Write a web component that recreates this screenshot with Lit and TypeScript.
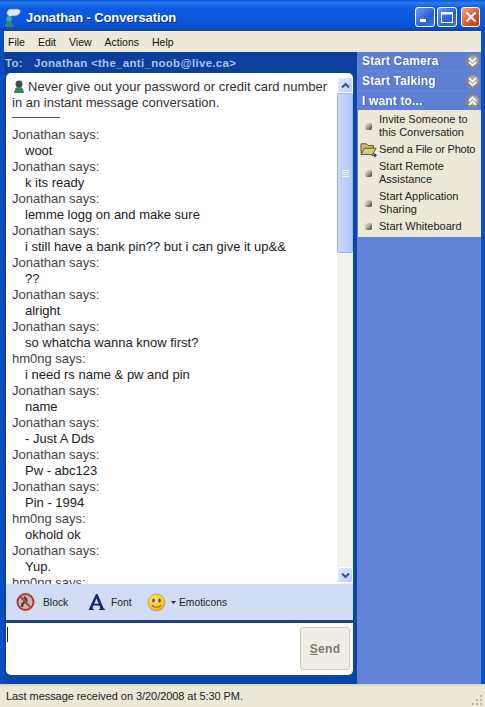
import { LitElement, html, css, svg } from "lit";
import { customElement } from "lit/decorators.js";

const chat: [string, string][] = [
  ["Jonathan says:", "woot"],
  ["Jonathan says:", "k its ready"],
  ["Jonathan says:", "lemme logg on and make sure"],
  ["Jonathan says:", "i still have a bank pin?? but i can give it up&&"],
  ["Jonathan says:", "??"],
  ["Jonathan says:", "alright"],
  ["Jonathan says:", "so whatcha wanna know first?"],
  ["hm0ng says:", "i need rs name & pw and pin"],
  ["Jonathan says:", "name"],
  ["Jonathan says:", "- Just A Dds"],
  ["Jonathan says:", "Pw - abc123"],
  ["Jonathan says:", "Pin - 1994"],
  ["hm0ng says:", "okhold ok"],
  ["Jonathan says:", "Yup."],
];

const chevrons = (up: boolean) => svg`<svg class="chev" width="17" height="17" viewBox="0 0 17 17">
  <circle cx="8.5" cy="8.5" r="7.5" fill="#84868f"/>
  <circle cx="9.500" cy="7.500" r="5" fill="#a8a9ad"/>
  <path d="${up ? "M5 8l3.5-3.5L12 8M5 12l3.5-3.5L12 12" : "M5 5l3.5 3.5L12 5M5 9l3.5 3.5L12 9"}" fill="none" stroke="#fff" stroke-width="1.7"/>
</svg>`;

const bullet = svg`<svg width="9" height="9" viewBox="0 0 9 9"><defs><linearGradient id="b" x1="0" y1="0" x2="1" y2="1"><stop offset="0" stop-color="#f4f2ea"/><stop offset=".5" stop-color="#a9a79b"/><stop offset="1" stop-color="#2c2c2c"/></linearGradient></defs><rect x="1" y="1" width="7" height="7" rx="2" fill="url(#b)"/></svg>`;

const folder = svg`<svg class="folder" width="18" height="16" viewBox="0 0 20 18">
  <path d="M1 2h6l2 2h6v9H1z" fill="#c9bd74" stroke="#4d4a2c"/>
  <path d="M1 14l4-7h13l-4 7z" fill="#d8cc80" stroke="#4d4a2c"/>
  <path d="M13 15h4M16 13l2 2-2 2" fill="none" stroke="#1c2c4c" stroke-width="1.200"/>
</svg>`;

@customElement("app-root")
export class AppRoot extends LitElement {
  static styles = css`
    :host { display: block; width: 485px; height: 707px; overflow: hidden; }
    * { box-sizing: border-box; }
    .win { width: 485px; height: 707px; display: flex; flex-direction: column; background: #0a4ec0;
      font-family: "Liberation Sans", Arial, sans-serif; font-size: 13px; color: #222; }
    .title { height: 31px; flex: none; display: flex; align-items: center; padding: 4px 5px 0 4px; gap: 4px;
      background: linear-gradient(#0a56d6 0, #2a7cf2 3px, #0b5be0 8px, #0a55dc 22px, #0a4ec8 28px, #0a40a8 31px);
      color: #fff; font-weight: bold; font-size: 13px; text-shadow: 1px 1px 0 #0a2f80; letter-spacing: -.1px; }
    .title .name { flex: 1; }
    .btns { display: flex; gap: 2px; margin-top: -2px; }
    .wbtn { width: 20px; height: 20px; border: 1px solid #fff; border-radius: 3px; display: flex; align-items: center; justify-content: center;
      background: linear-gradient(135deg, #6f9cf0, #2a5fd8 60%, #3c78e8); }
    .wbtn.close { width: 19px; margin-left: 2px; background: linear-gradient(135deg, #eda58e, #d8552e 60%, #c03a18); }
    .menu { height: 21px; flex: none; margin: 0 4px; background: #ece9d8; display: flex; align-items: center; padding-left: 4px; gap: 13px; color: #111; font-size: 10.5px; border-top: 1px solid #f6f4ea; }
    .main { flex: 1; min-height: 0; display: flex; margin: 0 4px; background: #6383d8; }
    .left { width: 353px; flex: none; display: flex; flex-direction: column; background: #0c45a8; padding: 0 4px 9px 2px; }
    .to { height: 21px; flex: none; display: flex; align-items: center; color: #a9c4f0; font-weight: bold; font-size: 11.5px; gap: 11px; letter-spacing: .3px; margin-left: -1px; background: #0a3f9e; margin-right: -4px; }
    .chatbox { flex: none; height: 511px; background: #fff; border-radius: 5px 5px 0 0; display: flex; overflow: hidden; }
    .log { flex: 1; min-width: 0; overflow: hidden; padding: 6px 0 0 6px; line-height: 16px; color: #333; }
    .warn-ic { display: inline-block; vertical-align: -2px; margin: 0 3px 0 1px; }
    .warn { height: 32px; }
    .rule { width: 48px; height: 1px; background: #555; margin: 6px 0 0 0; }
    .msgs { margin-top: 9px; }
    .say { color: #444; }
    .txt { padding-left: 13px; color: #222; }
    .sb { width: 16px; flex: none; margin-top: 4px; background: #f3f1ec; display: flex; flex-direction: column; padding-bottom: 1px; }
    .sbb { height: 16px; flex: none; background: linear-gradient(135deg, #e3ebfc, #bccdf5); border: 1px solid #fff; border-radius: 2px; display: flex; align-items: center; justify-content: center; }
    .thumb { height: 160px; flex: none; background: linear-gradient(90deg, #cad9fa, #b4c8f5); border: 1px solid #9db6ee; border-radius: 2px; display: flex; flex-direction: column; align-items: center; justify-content: center; gap: 1px; }
    .thumb i { display: block; width: 7px; height: 1px; background: #eef3fe; }
    .sb .grow { flex: 1; }
    .tools { height: 36px; flex: none; background: #d3dcf5; display: flex; align-items: center; font-size: 10.3px; color: #222; padding-left: 10px; }
    .tool { display: flex; align-items: center; }
    .tool.block { gap: 8px; width: 72px; }
    .tool.font { gap: 5px; width: 59px; }
    .arrow { margin: 0 3px 0 5px; }
    .sep { height: 3px; flex: none; background: #1c4290; }
    .input { height: 52px; flex: none; background: #fff; border-radius: 0 0 5px 5px; display: flex; justify-content: space-between; padding: 4px 3px 5px 1px; }
    .caret { width: 1px; height: 15px; background: #222; }
    .send { width: 50px; height: 43px; background: #f0eee4; border: 1px solid #cdcab8; border-radius: 3px; color: #7a7a72; font-weight: bold; font-size: 12px; display: flex; align-items: center; justify-content: center; letter-spacing: .3px; }
    .side { flex: 1; padding-left: 1px; display: flex; flex-direction: column; background: #6383d8; }
    .sh { height: 18px; flex: none; margin-top: 2px; background: #5f7fd2; color: #fff; font-weight: bold; font-size: 12px; display: flex; align-items: center; justify-content: space-between; padding: 0 0 0 4px; letter-spacing: .15px; text-shadow: 1px 0 0 #3c5cb0; }
    .sh:first-child { margin-top: 0; }
    .tasks { background: #ece9d8; height: 127px; padding-top: 1px; display: flex; flex-direction: column; font-size: 11px; color: #222; line-height: 13px; }
    .task { display: flex; flex: none; align-items: center; padding: 2px 0; white-space: nowrap; }
    .ic { width: 21px; height: 13px; flex: none; display: flex; align-items: center; justify-content: center; }
    .send-file { letter-spacing: -.2px; }
    .status { height: 23px; flex: none; background: linear-gradient(#d8d4c2, #ece9d8 4px); display: flex; align-items: center; padding-left: 6px; font-size: 11px; letter-spacing: -.06px; color: #222; position: relative; }
    .grip { position: absolute; right: 2px; bottom: 1px; }
  `;

  render() {
    return html`<div class="win">
      <div class="title">
        <svg width="18" height="20" viewBox="0 0 18 20">
          <path d="M6 1h7c3 0 4 2 3 4s-3 3-6 3H7l-2 2V8C2 7 2 2 6 1z" fill="#dfe9f5" stroke="#5b7ca8" stroke-width=".6"/>
          <circle cx="5" cy="11" r="3" fill="#3aa0b8"/>
          <path d="M1 19c0-4 2-6 4-6s4 2 5 6z" fill="#2b8a60"/>
        </svg>
        <span class="name">Jonathan - Conversation</span>
        <div class="btns">
          <div class="wbtn"><svg width="12" height="12" viewBox="0 0 12 12"><rect x="1" y="8" width="6" height="3" fill="#fff"/></svg></div>
          <div class="wbtn"><svg width="14" height="14" viewBox="0 0 14 14"><rect x="1.500" y="2.500" width="11" height="10" fill="none" stroke="#fff"/><rect x="1" y="2" width="12" height="2.500" fill="#fff"/></svg></div>
          <div class="wbtn close"><svg width="14" height="14" viewBox="0 0 14 14"><path d="M2.500 2.500l9 9M11.500 2.500l-9 9" stroke="#fff" stroke-width="2.200"/></svg></div>
        </div>
      </div>
      <div class="menu"><span>File</span><span>Edit</span><span>View</span><span>Actions</span><span>Help</span></div>
      <div class="main">
        <div class="left">
          <div class="to"><span>To:</span><span>Jonathan &lt;the_anti_noob@live.ca&gt;</span></div>
          <div class="chatbox">
            <div class="log">
              <div class="warn"><svg class="warn-ic" width="12" height="13" viewBox="0 0 12 13"><circle cx="6" cy="4" r="3.500" fill="#3f4a50"/><path d="M1 13c1-5 2-6 5-6s4 1 5 6z" fill="#3f7f5f"/></svg>Never give out your password or credit card number<br>in an instant message conversation.</div>
              <div class="rule"></div>
              <div class="msgs">
                ${chat.map(([a, b]) => html`<div class="say">${a}</div><div class="txt">${b}</div>`)}
                <div class="say">hm0ng says:</div>
              </div>
            </div>
            <div class="sb">
              <div class="sbb"><svg width="9" height="7" viewBox="0 0 9 7"><path d="M1 5.500l3.500-3.500L8 5.500" fill="none" stroke="#3a5088" stroke-width="2"/></svg></div>
              <div class="thumb"><i></i><i></i><i></i><i></i></div>
              <div class="grow"></div>
              <div class="sbb"><svg width="9" height="7" viewBox="0 0 9 7"><path d="M1 1.500L4.500 5 8 1.500" fill="none" stroke="#3a5088" stroke-width="2"/></svg></div>
            </div>
          </div>
          <div class="tools">
            <div class="tool block">
              <svg width="19" height="20" viewBox="0 0 19 20"><circle cx="9.500" cy="10" r="8" fill="#bfbcc0" stroke="#b03a30" stroke-width="2"/><path d="M6 15c0-4 2-5 4-5 1-2 0-4-2-5" fill="none" stroke="#444" stroke-width="2.500"/><path d="M4 4l11 12" stroke="#c83a2c" stroke-width="2"/></svg>
              <span>Block</span>
            </div>
            <div class="tool font">
              <svg width="18" height="18" viewBox="0 0 18 18"><path d="M.5 17L8 1h1.500l6 14 2 2H11v-1l1.500-.5-1.200-3H5.500l-1.200 3 1.500.5v1z" fill="#14286c"/><path d="M6.200 10.800h4.500L8.500 5.500z" fill="#d3dcf5"/></svg>
              <span>Font</span>
            </div>
            <div class="tool">
              <svg width="19" height="19" viewBox="0 0 19 19"><defs><radialGradient id="s" cx=".4" cy=".3" r=".8"><stop offset="0" stop-color="#fbe878"/><stop offset=".7" stop-color="#f0c03c"/><stop offset="1" stop-color="#d89028"/></radialGradient></defs><circle cx="9.500" cy="9.500" r="8.500" fill="url(#s)" stroke="#d8a838"/><ellipse cx="6.500" cy="7.500" rx="1.300" ry="2" fill="#6a5020"/><ellipse cx="12.500" cy="7.500" rx="1.300" ry="2" fill="#6a5020"/><path d="M5 12c2 3 7 3 9 0" fill="none" stroke="#8a6a20" stroke-width="1.200"/></svg>
              <svg class="arrow" width="5" height="3" viewBox="0 0 5 3"><path d="M0 0h5L2.500 3z" fill="#223"/></svg>
              <span>Emoticons</span>
            </div>
          </div>
          <div class="sep"></div>
          <div class="input"><div class="caret"></div><div class="send"><span><u>S</u>end</span></div></div>
        </div>
        <div class="side">
          <div class="sh"><span>Start Camera</span>${chevrons(false)}</div>
          <div class="sh"><span>Start Talking</span>${chevrons(false)}</div>
          <div class="sh"><span>I want to...</span>${chevrons(true)}</div>
          <div class="tasks">
            <div class="task"><div class="ic">${bullet}</div><div>Invite Someone to<br>this Conversation</div></div>
            <div class="task"><div class="ic">${folder}</div><div class="send-file">Send a File or Photo</div></div>
            <div class="task"><div class="ic">${bullet}</div><div>Start Remote<br>Assistance</div></div>
            <div class="task"><div class="ic">${bullet}</div><div>Start Application<br>Sharing</div></div>
            <div class="task"><div class="ic">${bullet}</div><div>Start Whiteboard</div></div>
          </div>
        </div>
      </div>
      <div class="status">Last message received on 3/20/2008 at 5:30 PM.
        <svg class="grip" width="12" height="12" viewBox="0 0 12 12"><g fill="#b8b4a0"><rect x="9" y="1" width="2" height="2"/><rect x="5" y="5" width="2" height="2"/><rect x="9" y="5" width="2" height="2"/><rect x="1" y="9" width="2" height="2"/><rect x="5" y="9" width="2" height="2"/><rect x="9" y="9" width="2" height="2"/></g></svg>
      </div>
    </div>`;
  }
}
